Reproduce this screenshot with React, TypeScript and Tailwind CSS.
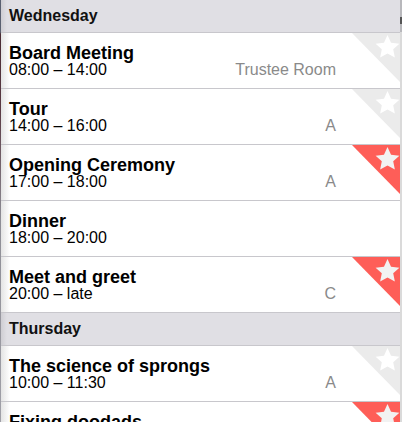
import React from "react";

type Item = { title: string; time: string; room?: string; star?: "gray" | "red" };

const Tri = ({ kind }: { kind: "gray" | "red" }) => (
  <svg
    className="absolute right-0 top-0"
    width="48"
    height="49"
    viewBox="0 0 48 49"
  >
    <polygon points="0,0 48,0 48,49" fill={kind === "red" ? "#fe5e58" : "#ebebeb"} />
    <polygon
      points="35.5,2 39.03,9.65 47.39,10.64 41.21,16.35 42.85,24.61 35.5,20.5 28.15,24.61 29.79,16.35 23.61,10.64 31.97,9.65"
      fill={kind === "red" ? "#f2f2f2" : "#ffffff"}
    />
  </svg>
);

const Header = ({ label }: { label: string }) => (
  <div className="h-[33px] shrink-0 border-b border-[#c8c7cc] bg-[linear-gradient(to_right,#cfced3,#e0dfe4_6px)] pl-[8px] text-[16px] font-bold leading-[32px] text-[#111]">
    {label}
  </div>
);

const Row = ({ item }: { item: Item }) => (
  <div className="relative h-[56px] shrink-0 border-b border-[#c8c7cc] bg-[linear-gradient(to_right,#e4e4e4,#ffffff_9px)] pl-[8px] pr-[64px] pt-[12px]">
    {item.star && <Tri kind={item.star} />}
    <div className="relative text-[18px] font-bold leading-[17px] text-black">{item.title}</div>
    <div className="relative flex justify-between text-[16px] leading-[16px] text-black">
      <span>{item.time}</span>
      {item.room && <span className="text-[#8a8a8a]">{item.room}</span>}
    </div>
  </div>
);

export default function App() {
  const wed: Item[] = [
    { title: "Board Meeting", time: "08:00 – 14:00", room: "Trustee Room", star: "gray" },
    { title: "Tour", time: "14:00 – 16:00", room: "A", star: "gray" },
    { title: "Opening Ceremony", time: "17:00 – 18:00", room: "A", star: "red" },
    { title: "Dinner", time: "18:00 – 20:00" },
    { title: "Meet and greet", time: "20:00 – late", room: "C", star: "red" },
  ];
  const thu: Item[] = [
    { title: "The science of sprongs", time: "10:00 – 11:30", room: "A", star: "gray" },
    { title: "Fixing doodads", time: "11:30 – 13:00", room: "B", star: "red" },
  ];
  return (
    <div
      className="flex h-[422px] w-[402px] overflow-hidden bg-white"
      style={{ fontFamily: '"Liberation Sans", Arial, sans-serif' }}
    >
      <div className="w-[1px] shrink-0 bg-[linear-gradient(to_bottom,#5a6070_0px,#5a6070_32px,#4a2c34_34px,#5a3a44_110px,#8e8e96_220px,#a0a0a8_422px)]" />
      <div className="flex min-w-0 flex-1 flex-col">
        <Header label="Wednesday" />
        {wed.map((it) => (
          <Row key={it.title} item={it} />
        ))}
        <Header label="Thursday" />
        {thu.map((it) => (
          <Row key={it.title} item={it} />
        ))}
      </div>
      <div className="relative w-[2px] shrink-0 bg-[#dadada]">
        <div className="h-[32px] bg-[#b8b8bc]" />
        <div className="absolute left-0 top-[17px] h-[7px] w-[2px] bg-[#555]" />
      </div>
    </div>
  );
}
